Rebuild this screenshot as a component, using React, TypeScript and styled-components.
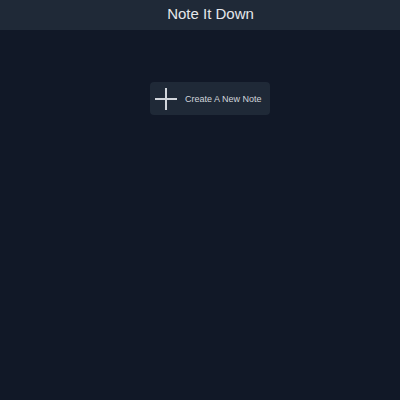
import React from "react";
import styled, { createGlobalStyle } from "styled-components";

const Global = createGlobalStyle`
  html, body { margin: 0; padding: 0; background: #111827; }
  body { font-family: "Liberation Sans", Arial, sans-serif; }
`;

const Page = styled.div`
  width: 400px;
  height: 400px;
  background: #111827;
  display: flex;
  flex-direction: column;
`;

const Header = styled.header`
  box-sizing: border-box;
  height: 30px;
  background: #1f2937;
  display: flex;
  align-items: center;
  justify-content: center;
  padding: 0 0 3px 21px;
`;

const Title = styled.h1`
  margin: 0;
  font-size: 15px;
  line-height: 17px;
  font-weight: 400;
  color: #e5e7eb;
`;

const Main = styled.main`
  display: flex;
  justify-content: center;
  padding-top: 52px;
  padding-left: 20px;
`;

const CreateButton = styled.button`
  display: flex;
  align-items: center;
  gap: 8px;
  height: 33px;
  width: 120px;
  padding: 1px 6px 0 5px;
  background: #1f2937;
  border: none;
  border-radius: 4px;
  color: #d1d5db;
  font-family: "Liberation Sans", Arial, sans-serif;
  font-size: 9px;
  cursor: pointer;
`;

const Plus = () => (
  <svg width="22" height="22" viewBox="0 0 22 22">
    <path d="M11 0V22M0 11H22" stroke="#d1d5db" strokeWidth="2" />
  </svg>
);

export default function App() {
  return (
    <>
      <Global />
      <Page>
        <Header>
          <Title>Note It Down</Title>
        </Header>
        <Main>
          <CreateButton>
            <Plus />
            Create A New Note
          </CreateButton>
        </Main>
      </Page>
    </>
  );
}
